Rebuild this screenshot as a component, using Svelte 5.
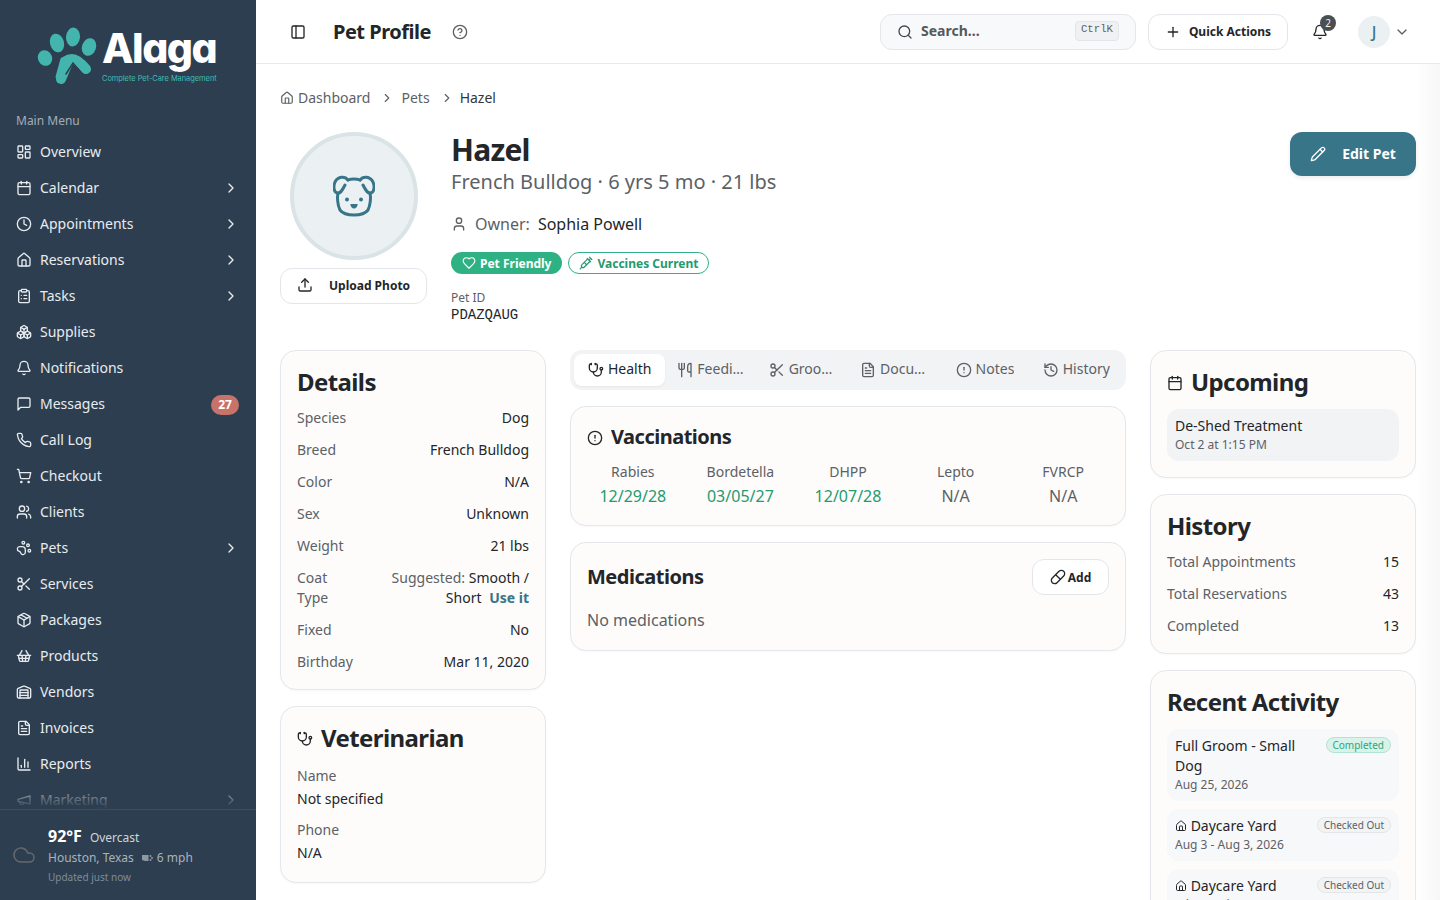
<script>
  const icons = {
    grid: '<rect x="3" y="3" width="7" height="9" rx="1"/><rect x="14" y="3" width="7" height="5" rx="1"/><rect x="14" y="12" width="7" height="9" rx="1"/><rect x="3" y="16" width="7" height="5" rx="1"/>',
    calendar: '<path d="M8 2v4"/><path d="M16 2v4"/><rect x="3" y="4" width="18" height="18" rx="2"/><path d="M3 10h18"/>',
    clock: '<circle cx="12" cy="12" r="10"/><polyline points="12 6 12 12 16 14"/>',
    house: '<path d="M15 21v-8a1 1 0 0 0-1-1h-4a1 1 0 0 0-1 1v8"/><path d="M3 10a2 2 0 0 1 .709-1.528l7-5.999a2 2 0 0 1 2.582 0l7 5.999A2 2 0 0 1 21 10v9a2 2 0 0 1-2 2H5a2 2 0 0 1-2-2z"/>',
    clipboard: '<rect x="8" y="2" width="8" height="4" rx="1"/><path d="M16 4h2a2 2 0 0 1 2 2v14a2 2 0 0 1-2 2H6a2 2 0 0 1-2-2V6a2 2 0 0 1 2-2h2"/><path d="M12 11h4"/><path d="M12 16h4"/><path d="M8 11h.01"/><path d="M8 16h.01"/>',
    boxes: '<path d="M2.97 12.92A2 2 0 0 0 2 14.63v3.24a2 2 0 0 0 .97 1.71l3 1.8a2 2 0 0 0 2.06 0L12 19v-5.5l-5-3-4.03 2.42Z"/><path d="m7 16.5-4.74-2.85"/><path d="m7 16.5 5-3"/><path d="M7 16.5v5.17"/><path d="M12 13.5V19l3.97 2.38a2 2 0 0 0 2.06 0l3-1.8a2 2 0 0 0 .97-1.71v-3.24a2 2 0 0 0-.97-1.71L17 10.5l-5 3Z"/><path d="m17 16.5-5-3"/><path d="m17 16.5 4.74-2.85"/><path d="M17 16.5v5.17"/><path d="M7.97 4.42A2 2 0 0 0 7 6.13v4.37l5 3 5-3V6.13a2 2 0 0 0-.97-1.71l-3-1.8a2 2 0 0 0-2.06 0l-3 1.8Z"/><path d="M12 8 7.26 5.15"/><path d="m12 8 4.74-2.85"/><path d="M12 13.5V8"/>',
    bell: '<path d="M10.268 21a2 2 0 0 0 3.464 0"/><path d="M3.262 15.326A1 1 0 0 0 4 17h16a1 1 0 0 0 .74-1.673C19.41 13.956 18 12.499 18 8A6 6 0 0 0 6 8c0 4.499-1.411 5.956-2.738 7.326"/>',
    message: '<path d="M21 15a2 2 0 0 1-2 2H7l-4 4V5a2 2 0 0 1 2-2h14a2 2 0 0 1 2 2z"/>',
    phone: '<path d="M22 16.92v3a2 2 0 0 1-2.18 2 19.79 19.79 0 0 1-8.63-3.07 19.5 19.5 0 0 1-6-6 19.79 19.79 0 0 1-3.07-8.67A2 2 0 0 1 4.11 2h3a2 2 0 0 1 2 1.72 12.84 12.84 0 0 0 .7 2.81 2 2 0 0 1-.45 2.11L8.09 9.91a16 16 0 0 0 6 6l1.27-1.27a2 2 0 0 1 2.11-.45 12.84 12.84 0 0 0 2.81.7A2 2 0 0 1 22 16.92z"/>',
    cart: '<circle cx="8" cy="21" r="1"/><circle cx="19" cy="21" r="1"/><path d="M2.05 2.05h2l2.66 12.42a2 2 0 0 0 2 1.58h9.78a2 2 0 0 0 1.95-1.57l1.65-7.43H5.12"/>',
    users: '<path d="M16 21v-2a4 4 0 0 0-4-4H6a4 4 0 0 0-4 4v2"/><circle cx="9" cy="7" r="4"/><path d="M22 21v-2a4 4 0 0 0-3-3.87"/><path d="M16 3.13a4 4 0 0 1 0 7.75"/>',
    paw: '<circle cx="11" cy="4" r="2"/><circle cx="18" cy="8" r="2"/><circle cx="20" cy="16" r="2"/><path d="M9 10a5 5 0 0 1 5 5v3.5a3.5 3.5 0 0 1-6.84 1.045Q6.52 17.48 4.46 16.84A3.5 3.5 0 0 1 5.5 10Z"/>',
    scissors: '<circle cx="6" cy="6" r="3"/><path d="M8.12 8.12 12 12"/><path d="M20 4 8.12 15.88"/><circle cx="6" cy="18" r="3"/><path d="M14.8 14.8 20 20"/>',
    package: '<path d="M11 21.73a2 2 0 0 0 2 0l7-4A2 2 0 0 0 21 16V8a2 2 0 0 0-1-1.73l-7-4a2 2 0 0 0-2 0l-7 4A2 2 0 0 0 3 8v8a2 2 0 0 0 1 1.73z"/><path d="M12 22V12"/><polyline points="3.29 7 12 12 20.71 7"/><path d="m7.5 4.27 9 5.15"/>',
    basket: '<path d="m15 11-1 9"/><path d="m19 11-4-7"/><path d="M2 11h20"/><path d="m3.5 11 1.6 7.4a2 2 0 0 0 2 1.6h9.8a2 2 0 0 0 2-1.6l1.7-7.4"/><path d="M4.5 15.5h15"/><path d="m5 11 4-7"/><path d="m9 11 1 9"/>',
    warehouse: '<path d="M18 21V10a1 1 0 0 0-1-1H7a1 1 0 0 0-1 1v11"/><path d="M22 19a2 2 0 0 1-2 2H4a2 2 0 0 1-2-2V8.35a2 2 0 0 1 1.26-1.86l8-3.2a2 2 0 0 1 1.48 0l8 3.2A2 2 0 0 1 22 8.35z"/><path d="M6 13h12"/><path d="M6 17h12"/>',
    file: '<path d="M15 2H6a2 2 0 0 0-2 2v16a2 2 0 0 0 2 2h12a2 2 0 0 0 2-2V7Z"/><path d="M14 2v4a2 2 0 0 0 2 2h4"/><path d="M10 9H8"/><path d="M16 13H8"/><path d="M16 17H8"/>',
    chart: '<path d="M3 3v16a2 2 0 0 0 2 2h16"/><path d="M18 17V9"/><path d="M13 17V5"/><path d="M8 17v-3"/>',
    megaphone: '<path d="m3 11 18-5v12L3 14v-3z"/><path d="M11.6 16.8a3 3 0 1 1-5.8-1.6"/>',
    chevron: '<path d="m9 18 6-6-6-6"/>',
    chevronDown: '<path d="m6 9 6 6 6-6"/>',
    cloud: '<path d="M17.5 19H9a7 7 0 1 1 6.71-9h1.79a4.5 4.5 0 1 1 0 9Z"/>',
    panel: '<rect x="3" y="3" width="18" height="18" rx="2"/><path d="M9 3v18"/>',
    help: '<circle cx="12" cy="12" r="10"/><path d="M9.09 9a3 3 0 0 1 5.83 1c0 2-3 3-3 3"/><path d="M12 17h.01"/>',
    search: '<path d="m21 21-4.34-4.34"/><circle cx="11" cy="11" r="8"/>',
    plus: '<path d="M5 12h14"/><path d="M12 5v14"/>',
    user: '<path d="M19 21v-2a4 4 0 0 0-4-4H9a4 4 0 0 0-4 4v2"/><circle cx="12" cy="7" r="4"/>',
    upload: '<path d="M12 3v12"/><path d="m17 8-5-5-5 5"/><path d="M21 15v4a2 2 0 0 1-2 2H5a2 2 0 0 1-2-2v-4"/>',
    pencil: '<path d="M21.174 6.812a1 1 0 0 0-3.986-3.987L3.842 16.174a2 2 0 0 0-.5.83l-1.321 4.352a.5.5 0 0 0 .623.622l4.353-1.32a2 2 0 0 0 .83-.497z"/><path d="m15 5 4 4"/>',
    heart: '<path d="M19 14c1.49-1.46 3-3.21 3-5.5A5.5 5.5 0 0 0 16.5 3c-1.76 0-3 .5-4.5 2-1.5-1.5-2.74-2-4.5-2A5.5 5.5 0 0 0 2 8.5c0 2.3 1.5 4.05 3 5.5l7 7Z"/>',
    syringe: '<path d="m18 2 4 4"/><path d="m17 7 3-3"/><path d="M19 9 8.7 19.3c-1 1-2.5 1-3.4 0l-.6-.6c-1-1-1-2.5 0-3.4L15 5"/><path d="m9 11 4 4"/><path d="m5 19-3 3"/><path d="m14 4 6 6"/>',
    stethoscope: '<path d="M11 2v2"/><path d="M5 2v2"/><path d="M5 3H4a2 2 0 0 0-2 2v4a6 6 0 0 0 12 0V5a2 2 0 0 0-2-2h-1"/><path d="M8 15a6 6 0 0 0 12 0v-3"/><circle cx="20" cy="10" r="2"/>',
    utensils: '<path d="M3 2v7c0 1.1.9 2 2 2h4a2 2 0 0 0 2-2V2"/><path d="M7 2v20"/><path d="M21 15V2a5 5 0 0 0-5 5v6c0 1.1.9 2 2 2h3Zm0 0v7"/>',
    alert: '<circle cx="12" cy="12" r="10"/><path d="M12 8v4"/><path d="M12 16h.01"/>',
    history: '<path d="M3 12a9 9 0 1 0 9-9 9.75 9.75 0 0 0-6.74 2.74L3 8"/><path d="M3 3v5h5"/><path d="M12 7v5l4 2"/>',
    pill: '<path d="m10.5 20.5 10-10a4.95 4.95 0 1 0-7-7l-10 10a4.95 4.95 0 1 0 7 7Z"/><path d="m8.5 8.5 7 7"/>'
  };

  const menu = [
    { label: "Overview", icon: "grid" },
    { label: "Calendar", icon: "calendar", more: true },
    { label: "Appointments", icon: "clock", more: true },
    { label: "Reservations", icon: "house", more: true },
    { label: "Tasks", icon: "clipboard", more: true },
    { label: "Supplies", icon: "boxes" },
    { label: "Notifications", icon: "bell" },
    { label: "Messages", icon: "message", badge: 27 },
    { label: "Call Log", icon: "phone" },
    { label: "Checkout", icon: "cart" },
    { label: "Clients", icon: "users" },
    { label: "Pets", icon: "paw", more: true },
    { label: "Services", icon: "scissors" },
    { label: "Packages", icon: "package" },
    { label: "Products", icon: "basket" },
    { label: "Vendors", icon: "warehouse" },
    { label: "Invoices", icon: "file" },
    { label: "Reports", icon: "chart" },
    { label: "Marketing", icon: "megaphone", more: true }
  ];

  const tabs = [
    { label: "Health", icon: "stethoscope", active: true },
    { label: "Feeding", icon: "utensils" },
    { label: "Grooming", icon: "scissors" },
    { label: "Documents", icon: "file" },
    { label: "Notes", icon: "alert" },
    { label: "History", icon: "history" }
  ];

  const vaccines = [
    { name: "Rabies", date: "12/29/28", ok: true },
    { name: "Bordetella", date: "03/05/27", ok: true },
    { name: "DHPP", date: "12/07/28", ok: true },
    { name: "Lepto", date: "N/A" },
    { name: "FVRCP", date: "N/A" }
  ];

  const detailsTop = [
    ["Species", "Dog"],
    ["Breed", "French Bulldog"],
    ["Color", "N/A"],
    ["Sex", "Unknown"],
    ["Weight", "21 lbs"]
  ];
</script>

{#snippet icon(name, size = 16, cls = "")}
  <svg class="ic {cls}" width={size} height={size} viewBox="0 0 24 24">{@html icons[name]}</svg>
{/snippet}

<div class="app">
  <aside class="sidebar">
    <div class="logo">
      <svg class="paw" width="62" height="62" viewBox="0 0 62 62">
        <ellipse cx="8" cy="31" rx="7" ry="8" transform="rotate(-25 8 31)" />
        <ellipse cx="20" cy="16" rx="7" ry="9.5" transform="rotate(-15 20 16)" />
        <ellipse cx="36" cy="10" rx="7" ry="9.5" transform="rotate(5 36 10)" />
        <ellipse cx="52" cy="20" rx="7" ry="9" transform="rotate(20 52 20)" />
        <path class="pad" d="M24 52 L32 33 Q38 29 49 42" />
        <path class="pad-in" d="M20 50 L31 29 L25 32 Z" />
        <path class="pad-cut" d="M29 47 L36 36 L42 43" />
      </svg>
      <div class="wordmark">
        <span class="brand">Alaga</span>
        <span class="tagline">Complete Pet-Care Management</span>
      </div>
    </div>
    <div class="menu-title">Main Menu</div>
    <nav class="nav">
      {#each menu as item}
        <div class="nav-item">
          {@render icon(item.icon)}
          <span class="nav-label">{item.label}</span>
          {#if item.badge}<span class="nav-badge">{item.badge}</span>{/if}
          {#if item.more}{@render icon("chevron", 16, "nav-more")}{/if}
        </div>
      {/each}
      <div class="nav-fade"></div>
    </nav>
    <div class="weather">
      <svg class="ic cloud" width="24" height="24" viewBox="0 0 24 24">{@html icons.cloud}</svg>
      <div class="weather-text">
        <div class="weather-top"><strong>92°F</strong><span>Overcast</span></div>
        <div class="weather-place">
          <span>Houston, Texas</span>
          <span class="wind">
            <svg width="12" height="10" viewBox="0 0 12 10"><path d="M0 2h6.5v6H3L0 7z" /><circle cx="8.5" cy="3" r="1" /><circle cx="10" cy="5" r="1" /><circle cx="8.5" cy="7" r="1" /></svg>6 mph
          </span>
        </div>
        <div class="weather-time">Updated just now</div>
      </div>
    </div>
  </aside>

  <main class="main">
    <header class="topbar">
      <div class="top-left">
        {@render icon("panel", 16)}
        <h1>Pet Profile</h1>
        {@render icon("help", 16, "muted")}
      </div>
      <div class="top-right">
        <div class="search">
          {@render icon("search", 16)}
          <span class="search-text">Search...</span>
          <kbd>CtrlK</kbd>
        </div>
        <button class="btn quick">{@render icon("plus", 16)}Quick Actions</button>
        <div class="bell">
          {@render icon("bell", 16)}
          <span class="bell-count">2</span>
        </div>
        <div class="account">
          <span class="avatar">J</span>
          {@render icon("chevronDown", 16, "muted")}
        </div>
      </div>
    </header>

    <div class="content">
      <div class="crumbs">
        {@render icon("house", 14, "muted")}
        <span class="crumb first">Dashboard</span>
        {@render icon("chevron", 14, "muted")}
        <span class="crumb">Pets</span>
        {@render icon("chevron", 14, "muted")}
        <span class="crumb current">Hazel</span>
      </div>

      <section class="profile">
        <div class="photo">
          <div class="pet-circle">
            <svg class="dog" width="42" height="42" viewBox="0 0 42 42">
              <path d="M15 5C12 1 5 1 2 7c-2 5-1 10 2 11 3 1 5-2 8-8" />
              <path d="M27 5c3-4 10-4 13 2 2 5 1 10-2 11-3 1-5-2-8-8" />
              <path d="M15 5c3-1.500 9-1.500 12 0" />
              <path d="M5 18c-1 4-.5 12 2 17 3 4 9 5 14 5s11-1 14-5c2.500-5 3-13 2-17" />
              <circle class="dot" cx="14" cy="24.500" r="2" />
              <circle class="dot" cx="28" cy="24.500" r="2" />
              <path class="dot" d="M17.500 29h7c.5 2.500-2 4.500-3.500 4.500s-4-2-3.500-4.500z" />
            </svg>
          </div>
          <button class="btn upload">{@render icon("upload", 16)}Upload Photo</button>
        </div>
        <div class="info">
          <h2 class="name">Hazel</h2>
          <p class="sub">French Bulldog · 6 yrs 5 mo · 21 lbs</p>
          <p class="owner">{@render icon("user", 16, "muted")}<span class="owner-label">Owner:</span><span>Sophia Powell</span></p>
          <div class="tags">
            <span class="tag solid">{@render icon("heart", 14)}Pet Friendly</span>
            <span class="tag outline">{@render icon("syringe", 14)}Vaccines Current</span>
          </div>
          <div class="pet-id-label">Pet ID</div>
          <div class="pet-id">PDAZQAUG</div>
        </div>
        <button class="edit">{@render icon("pencil", 16)}<span>Edit Pet</span></button>
      </section>

      <div class="columns">
        <div class="col">
          <section class="card">
            <h3 class="big-title">Details</h3>
            <div class="rows">
              {#each detailsTop as [k, v]}
                <div class="row"><span class="key">{k}</span><span class="val">{v}</span></div>
              {/each}
              <div class="row">
                <span class="key coat">Coat Type</span>
                <span class="val"><span class="key">Suggested:</span> Smooth / Short <b class="use">Use it</b></span>
              </div>
              <div class="row"><span class="key">Fixed</span><span class="val">No</span></div>
              <div class="row"><span class="key">Birthday</span><span class="val">Mar 11, 2020</span></div>
            </div>
          </section>
          <section class="card">
            <h3 class="big-title with-icon">{@render icon("stethoscope", 16)}Veterinarian</h3>
            <div class="vet">
              <div class="key">Name</div>
              <div class="vet-val">Not specified</div>
              <div class="key vet-next">Phone</div>
              <div class="vet-val">N/A</div>
            </div>
          </section>
        </div>

        <div class="col">
          <div class="tabs">
            {#each tabs as tab}
              <div class="tab" class:active={tab.active}>
                {@render icon(tab.icon, 16)}
                <span class="tab-text">{tab.label}</span>
              </div>
            {/each}
          </div>
          <section class="card">
            <h3 class="mid-title with-icon">{@render icon("alert", 16)}Vaccinations</h3>
            <div class="vaccines">
              {#each vaccines as v}
                <div class="vaccine">
                  <div class="key">{v.name}</div>
                  <div class="vaccine-date" class:ok={v.ok}>{v.date}</div>
                </div>
              {/each}
            </div>
          </section>
          <section class="card">
            <div class="med-head">
              <h3 class="mid-title">Medications</h3>
              <button class="btn add">{@render icon("pill", 16)}Add</button>
            </div>
            <p class="empty">No medications</p>
          </section>
        </div>

        <div class="col">
          <section class="card">
            <h3 class="big-title with-icon">{@render icon("calendar", 16)}Upcoming</h3>
            <div class="up-item">
              <div class="item-title">De-Shed Treatment</div>
              <div class="item-date">Oct 2 at 1:15 PM</div>
            </div>
          </section>
          <section class="card">
            <h3 class="big-title">History</h3>
            <div class="rows">
              <div class="row"><span class="key">Total Appointments</span><span class="val">15</span></div>
              <div class="row"><span class="key">Total Reservations</span><span class="val">43</span></div>
              <div class="row"><span class="key">Completed</span><span class="val">13</span></div>
            </div>
          </section>
          <section class="card">
            <h3 class="big-title">Recent Activity</h3>
            <div class="activity">
              <div class="act-item">
                <div class="act-main">
                  <div class="item-title">Full Groom - Small Dog</div>
                  <div class="item-date">Aug 25, 2026</div>
                </div>
                <span class="pill green">Completed</span>
              </div>
              <div class="act-item">
                <div class="act-main">
                  <div class="item-title">{@render icon("house", 12)} Daycare Yard</div>
                  <div class="item-date">Aug 3 - Aug 3, 2026</div>
                </div>
                <span class="pill">Checked Out</span>
              </div>
              <div class="act-item">
                <div class="act-main">
                  <div class="item-title">{@render icon("house", 12)} Daycare Yard</div>
                  <div class="item-date">Jul 20 - Jul 20, 2026</div>
                </div>
                <span class="pill">Checked Out</span>
              </div>
            </div>
          </section>
        </div>
      </div>
    </div>
  </main>
</div>

<style>
  :global(body) {
    margin: 0;
    font-family: "Noto Sans", sans-serif;
    color: #232629;
    background: #fff;
  }
  .app {
    display: flex;
    height: 900px;
    overflow: hidden;
  }
  .ic {
    fill: none;
    stroke: currentColor;
    stroke-width: 2;
    stroke-linecap: round;
    stroke-linejoin: round;
    flex: none;
  }
  .muted {
    color: #5c6166;
  }
  h1, h2, h3, p {
    margin: 0;
  }
  button {
    font-family: inherit;
  }

  /* sidebar */
  .sidebar {
    width: 256px;
    flex: none;
    display: flex;
    flex-direction: column;
    background: #2d3e50;
    color: #e8ecef;
  }
  .logo {
    height: 101px;
    padding: 27px 0 0 37px;
    box-sizing: border-box;
    display: flex;
    flex: none;
  }
  .paw {
    fill: #43b5ad;
    flex: none;
  }
  .pad {
    fill: none;
    stroke: #43b5ad;
    stroke-width: 10;
    stroke-linecap: round;
    stroke-linejoin: round;
  }
  .pad-in {
    stroke: #43b5ad;
    stroke-width: 3;
    stroke-linejoin: round;
  }
  .pad-cut {
    fill: none;
    stroke: #2d3e50;
    stroke-width: 1.5;
    stroke-linecap: round;
  }
  .wordmark {
    display: flex;
    flex-direction: column;
    margin-left: 3px;
  }
  .brand {
    font-family: Inter, sans-serif;
    font-feature-settings: "cv11" 1;
    font-weight: 800;
    font-size: 41px;
    line-height: 44px;
    color: #fff;
    letter-spacing: -1.5px;
    margin-top: -1px;
  }
  .tagline {
    font-family: Inter, sans-serif;
    font-size: 7.4px;
    line-height: 10px;
    color: #3fbfb5;
    margin-top: 4px;
    white-space: nowrap;
  }
  .menu-title {
    font-size: 12px;
    line-height: 16px;
    height: 33px;
    padding: 12px 16px 0;
    box-sizing: border-box;
    color: #a4adb6;
    flex: none;
  }
  .nav {
    flex: 1;
    min-height: 0;
    overflow: hidden;
    position: relative;
  }
  .nav-item {
    height: 36px;
    padding: 0 17px 0 16px;
    display: flex;
    align-items: center;
    gap: 8px;
    font-size: 14px;
  }
  .nav-label {
    flex: 1;
    margin-top: -2px;
  }
  .nav-badge {
    width: 28px;
    height: 20px;
    border-radius: 10px;
    background: #c8736a;
    color: #fff;
    font-size: 12px;
    font-weight: 700;
    line-height: 20px;
    text-align: center;
    margin-top: 2px;
  }
  .nav-fade {
    position: absolute;
    left: 0;
    right: 0;
    bottom: 0;
    height: 32px;
    background: linear-gradient(to bottom, rgba(45, 62, 80, 0), #2d3e50);
  }
  .weather {
    height: 91px;
    flex: none;
    box-sizing: border-box;
    border-top: 1px solid #3c4d5f;
    padding: 0 0 0 12px;
    display: flex;
    align-items: center;
    gap: 12px;
  }
  .cloud {
    color: #66696c;
    stroke-width: 1.500;
  }
  .weather-text {
    margin-top: 1px;
  }
  .weather-top {
    display: flex;
    align-items: baseline;
    gap: 8px;
    font-size: 12px;
    color: #cfd5da;
    line-height: 20px;
  }
  .weather-top strong {
    font-size: 16px;
    color: #fff;
    font-weight: 700;
  }
  .weather-place {
    display: flex;
    gap: 8px;
    font-size: 12px;
    line-height: 20px;
    color: #a9b2bb;
  }
  .wind svg {
    fill: #8e98a3;
    vertical-align: -1px;
    margin-right: 3px;
  }
  .weather-time {
    font-size: 10px;
    line-height: 18px;
    color: #7f8b97;
  }

  /* top bar */
  .main {
    flex: 1;
    min-width: 0;
    display: flex;
    flex-direction: column;
  }
  .topbar {
    height: 64px;
    flex: none;
    box-sizing: border-box;
    border-bottom: 1px solid #e6e8ea;
    display: flex;
    align-items: center;
    justify-content: space-between;
    padding: 0 32px 0 34px;
  }
  .top-left {
    display: flex;
    align-items: center;
    gap: 20px;
  }
  .top-left h1 {
    font-size: 20px;
    font-weight: 700;
    line-height: 28px;
    letter-spacing: -0.025em;
    margin-left: 7px;
    margin-right: 1px;
  }
  .top-right {
    display: flex;
    align-items: center;
  }
  .search {
    width: 256px;
    height: 36px;
    box-sizing: border-box;
    border: 1px solid #e3e6ea;
    border-radius: 12px;
    background: #f8f9fb;
    display: flex;
    align-items: center;
    padding: 0 16px;
    gap: 8px;
    color: #44484c;
  }
  .search-text {
    flex: 1;
    font-size: 14px;
    font-weight: 700;
    color: #55595d;
    margin-top: -2px;
  }
  kbd {
    font-family: "Liberation Mono", monospace;
    font-size: 10.7px;
    width: 44px;
    height: 20px;
    box-sizing: border-box;
    line-height: 14px;
    text-align: center;
    background: #f0f1f3;
    border: 1px solid #e3e5e8;
    border-radius: 4px;
    color: #5e6266;
    margin-top: -1px;
  }
  .btn {
    background: #fff;
    border: 1px solid #e3e6ea;
    border-radius: 12px;
    color: #232629;
    font-weight: 700;
    font-size: 12px;
    display: inline-flex;
    align-items: center;
    padding: 0;
  }
  .quick {
    width: 140px;
    height: 36px;
    margin-left: 12px;
    justify-content: center;
    gap: 8px;
  }
  .bell {
    position: relative;
    display: flex;
    margin-left: 24px;
    margin-top: 1px;
    width: 16px;
  }
  .bell-count {
    position: absolute;
    left: 8px;
    top: -9px;
    width: 16px;
    height: 16px;
    border-radius: 50%;
    background: #4b4f53;
    color: #f2f3f4;
    font-size: 10px;
    line-height: 16px;
    text-align: center;
  }
  .account {
    display: flex;
    align-items: center;
    gap: 4px;
    margin-left: 30px;
    margin-right: -2px;
  }
  .avatar {
    width: 32px;
    height: 32px;
    border-radius: 50%;
    background: #ebf1f3;
    color: #387589;
    font-size: 16px;
    font-weight: 500;
    text-align: center;
    line-height: 32px;
  }

  /* content */
  .content {
    flex: 1;
    min-height: 0;
    overflow: hidden;
    padding: 24px;
    background: linear-gradient(to right, #fff calc(100% - 24px), #f7f7f8);
  }
  .crumbs {
    display: flex;
    align-items: center;
    height: 20px;
    font-size: 14px;
    color: #5c6166;
  }
  .crumb {
    margin: -2px 10px 0 7px;
  }
  .crumb.first {
    margin-left: 4px;
  }
  .crumb.current {
    color: #33373a;
    margin-left: 6px;
  }
  .profile {
    display: flex;
    margin-top: 24px;
    height: 218px;
  }
  .photo {
    width: 147px;
    flex: none;
    display: flex;
    flex-direction: column;
    align-items: center;
    gap: 8px;
  }
  .pet-circle {
    width: 128px;
    height: 128px;
    box-sizing: border-box;
    border: 4px solid #dae4e7;
    border-radius: 50%;
    background: #ebf1f3;
    display: flex;
    align-items: center;
    justify-content: center;
  }
  .dog {
    fill: none;
    stroke: #387589;
    stroke-width: 3;
    stroke-linecap: round;
  }
  .dog .dot {
    fill: #387589;
    stroke: none;
  }
  .upload {
    width: 147px;
    height: 36px;
    padding: 0 0 2px 16px;
    gap: 16px;
  }
  .info {
    margin-left: 24px;
    flex: 1;
  }
  .name {
    font-size: 30px;
    line-height: 36px;
    font-weight: 700;
    letter-spacing: -0.025em;
  }
  .sub {
    font-size: 20px;
    line-height: 28px;
    color: #5c6166;
  }
  .owner {
    display: flex;
    align-items: center;
    font-size: 16px;
    line-height: 24px;
    margin-top: 16px;
    gap: 8px;
  }
  .owner-label {
    color: #5c6166;
  }
  .tags {
    display: flex;
    gap: 6px;
    margin-top: 16px;
  }
  .tag {
    height: 22px;
    box-sizing: border-box;
    border-radius: 11px;
    font-size: 12px;
    font-weight: 700;
    display: inline-flex;
    align-items: center;
    gap: 4px;
    padding: 0 11px;
  }
  .tag.solid {
    background: #2fb283;
    color: #fff;
  }
  .tag.outline {
    border: 1px solid #2fb283;
    color: #249a70;
    padding: 0 10px;
  }
  .pet-id-label {
    font-size: 12px;
    line-height: 16px;
    color: #5c6166;
    margin-top: 16px;
  }
  .pet-id {
    font-family: "Liberation Mono", monospace;
    font-size: 14px;
    line-height: 18px;
  }
  .edit {
    width: 126px;
    height: 44px;
    flex: none;
    border: 0;
    border-radius: 12px;
    background: #387589;
    color: #fff;
    font-size: 14px;
    font-weight: 700;
    display: inline-flex;
    align-items: center;
    justify-content: center;
    gap: 16px;
    box-shadow: 0 2px 4px rgba(0, 0, 0, 0.08);
  }
  .edit span {
    margin-top: -2px;
  }

  .columns {
    display: grid;
    grid-template-columns: 266px 1fr 266px;
    gap: 24px;
    align-items: start;
  }
  .col {
    display: flex;
    flex-direction: column;
    gap: 16px;
    min-width: 0;
  }
  .card {
    background: #fdfcfb;
    border: 1px solid #e4e7eb;
    border-radius: 16px;
    padding: 16px;
    box-shadow: 0 1px 2px rgba(0, 0, 0, 0.03);
  }
  .big-title {
    font-size: 24px;
    line-height: 30px;
    margin-bottom: 2px;
    font-weight: 700;
    letter-spacing: -0.025em;
  }
  .mid-title {
    font-size: 20px;
    line-height: 28px;
    font-weight: 700;
    letter-spacing: -0.025em;
  }
  .with-icon {
    display: flex;
    align-items: center;
    gap: 8px;
  }
  .with-icon .ic {
    margin-top: 2px;
  }
  .rows {
    display: flex;
    flex-direction: column;
    gap: 12px;
    margin-top: 11px;
    padding-bottom: 1px;
    font-size: 14px;
    line-height: 20px;
  }
  .row {
    display: flex;
    justify-content: space-between;
    gap: 16px;
  }
  .key {
    color: #5c6166;
    font-size: 14px;
    line-height: 20px;
  }
  .coat {
    width: 40px;
    flex: none;
  }
  .val {
    text-align: right;
  }
  .use {
    color: #387589;
    font-weight: 700;
    margin-left: 4px;
  }
  .vet {
    margin-top: 13px;
    padding-bottom: 3px;
    font-size: 14px;
  }
  .vet-val {
    line-height: 20px;
    margin-top: 3px;
  }
  .vet-next {
    margin-top: 11px;
  }

  .tabs {
    height: 40px;
    box-sizing: border-box;
    padding: 4px;
    background: #f1f3f5;
    border-radius: 12px;
    display: grid;
    grid-template-columns: repeat(6, minmax(0, 1fr));
  }
  .tab {
    display: flex;
    align-items: center;
    justify-content: center;
    gap: 4px;
    min-width: 0;
    padding: 0 12px;
    font-size: 14px;
    color: #5c6166;
    border-radius: 8px;
  }
  .tab.active {
    background: #fff;
    color: #232629;
    box-shadow: 0 1px 2px rgba(0, 0, 0, 0.05);
  }
  .tab-text {
    overflow: hidden;
    white-space: nowrap;
    text-overflow: ellipsis;
    margin-top: -3px;
  }
  .vaccines {
    display: grid;
    grid-template-columns: repeat(5, 1fr);
    gap: 16px;
    margin-top: 11px;
    padding-bottom: 1px;
    text-align: center;
  }
  .vaccine-date {
    font-size: 16px;
    line-height: 24px;
    margin-top: 2px;
    color: #5c6166;
  }
  .vaccine-date.ok {
    color: #249a70;
  }
  .med-head {
    display: flex;
    align-items: center;
    justify-content: space-between;
  }
  .add {
    width: 77px;
    height: 36px;
    justify-content: center;
    gap: 2px;
  }
  .empty {
    font-size: 16px;
    line-height: 24px;
    color: #5c6166;
    margin: 13px 0 2px;
  }

  .up-item {
    background: #f1f3f5;
    border-radius: 12px;
    padding: 7px 8px 8px;
    margin-top: 12px;
  }
  .item-title {
    font-size: 14px;
    line-height: 20px;
  }
  .item-title .ic {
    vertical-align: -1px;
  }
  .item-date {
    font-size: 12px;
    line-height: 16px;
    color: #5c6166;
    margin-top: 1px;
  }
  .activity {
    display: flex;
    flex-direction: column;
    gap: 8px;
    margin-top: 12px;
  }
  .act-item {
    display: flex;
    justify-content: space-between;
    align-items: flex-start;
    gap: 8px;
    background: #f7f8f9;
    border-radius: 12px;
    padding: 7px 8px 8px;
  }
  .pill {
    flex: none;
    height: 16px;
    box-sizing: border-box;
    border: 1px solid #e3e5e8;
    border-radius: 8px;
    background: #f1f3f5;
    color: #5c6166;
    font-size: 10px;
    line-height: 14px;
    padding: 0 6px;
    margin-top: 1px;
  }
  .pill.green {
    background: #d9f2ea;
    border-color: #b3e3d3;
    color: #2aa77c;
  }
</style>
